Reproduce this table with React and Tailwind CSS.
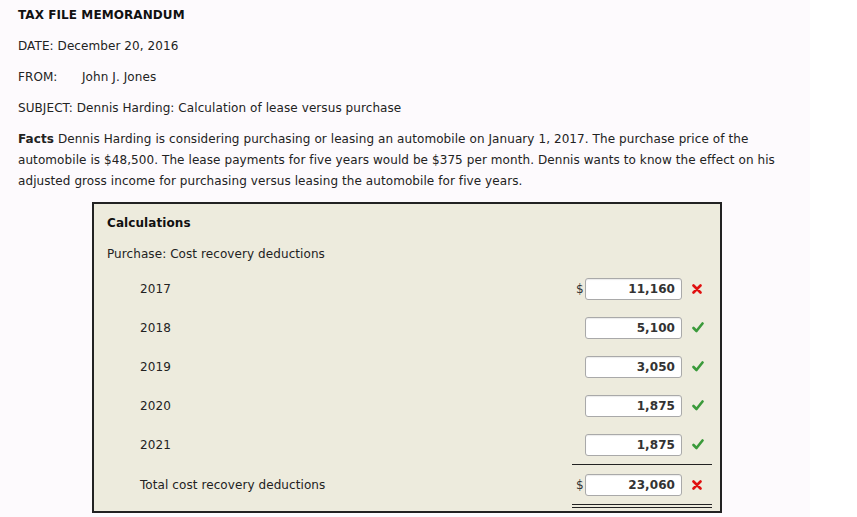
import React from "react";

function Check() {
  return (
    <svg width="12" height="11" viewBox="0 0 12 11" className="block">
      <path d="M1.5 6 L4.5 9 L10.5 1.5" fill="none" stroke="#3a9a3a" strokeWidth="2.6" strokeLinecap="round" strokeLinejoin="round" />
    </svg>
  );
}

function Cross() {
  return (
    <svg width="10" height="10" viewBox="0 0 10 10" className="block">
      <path d="M1.5 1.5 L8.5 8.5 M8.5 1.5 L1.5 8.5" fill="none" stroke="#e01010" strokeWidth="2.6" strokeLinecap="round" />
    </svg>
  );
}

function Row({ label, value, ok, dollar, tall }) {
  return (
    <div className={tall ? "flex items-center h-[40px]" : "flex items-center h-[39px]"}>
      <div className="pl-[33px] flex-1">{label}</div>
      <div className="w-[9px] text-[12px] text-[#333]">{dollar ? "$" : ""}</div>
      <div className="w-[97px] h-[22px] border border-[#a9a9a9] rounded-[3px] bg-white shadow-[inset_0_1px_1px_rgba(0,0,0,0.08)] flex items-center justify-end pr-[6px] font-bold text-[#333]">
        {value}
      </div>
      <div className="w-[30px] pl-[10px]">{ok ? <Check /> : <Cross />}</div>
    </div>
  );
}

export default function App() {
  return (
    <div className="w-[857px] h-[517px] bg-white overflow-hidden" style={{ fontFamily: '"DejaVu Sans", Verdana, sans-serif' }}>
      <div className="w-[810px] h-full bg-[#fdfafd] pl-[18px] pt-[7px] text-[12px] text-[#222] leading-[16px] tracking-[0.08px]">
        <div className="font-bold text-[#111]">TAX FILE MEMORANDUM</div>
        <div className="mt-[15px]">DATE: December 20, 2016</div>
        <div className="mt-[15px] flex"><span className="w-[64px]">FROM:</span><span>John J. Jones</span></div>
        <div className="mt-[15px]">SUBJECT: Dennis Harding: Calculation of lease versus purchase</div>
        <div className="mt-[13px] leading-[21px]">
          <span className="font-bold">Facts</span> Dennis Harding is considering purchasing or leasing an automobile on January 1, 2017. The purchase price of the<br />
          automobile is $48,500. The lease payments for five years would be $375 per month. Dennis wants to know the effect on his<br />
          adjusted gross income for purchasing versus leasing the automobile for five years.
        </div>
        <div className="mt-[10px] ml-[74px] w-[630px] h-[311px] border-2 border-[#222] bg-[#edebdd] pl-[13px] pr-[8px] pt-[11px] overflow-hidden">
          <div className="font-bold text-[#111]">Calculations</div>
          <div className="mt-[15px]">Purchase: Cost recovery deductions</div>
          <div className="mt-[7px]">
            <Row label="2017" value="11,160" ok={false} dollar />
            <Row label="2018" value="5,100" ok />
            <Row label="2019" value="3,050" ok />
            <Row label="2020" value="1,875" ok />
            <Row label="2021" value="1,875" ok />
            <div className="flex justify-end"><div className="w-[140px] border-t border-[#222]" /></div>
            <Row label="Total cost recovery deductions" value="23,060" ok={false} dollar tall />
            <div className="flex justify-end -mt-[1px]"><div className="w-[140px] h-[4px] border-t border-b border-[#222]" /></div>
          </div>
        </div>
      </div>
    </div>
  );
}
